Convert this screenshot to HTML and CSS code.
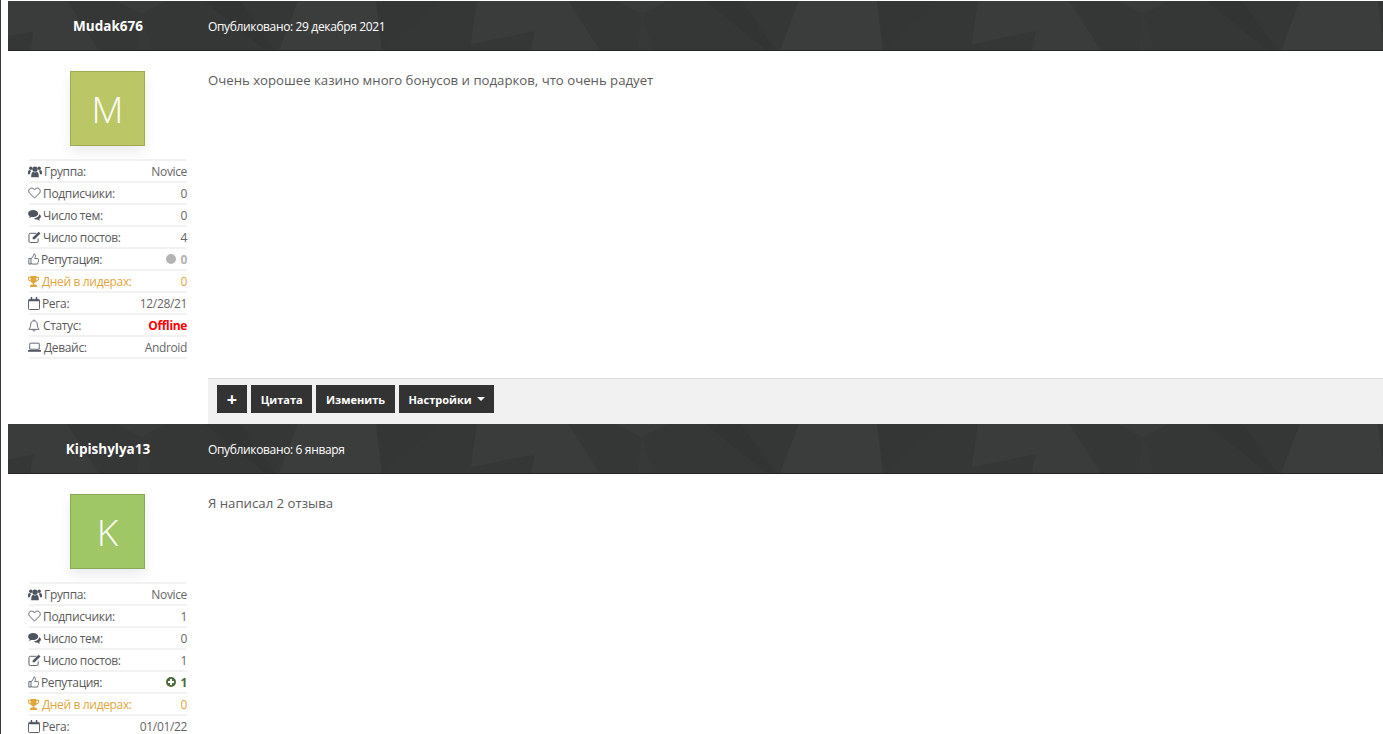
FILE: index.html
```html
<!DOCTYPE html>
<html lang="ru">
<head>
<meta charset="utf-8">
<title>Отзывы</title>
<link rel="stylesheet" href="styles.css">
</head>
<body>
<svg class="sprite" width="0" height="0" aria-hidden="true">
  <defs>
    <pattern id="poly" width="501" height="50" patternUnits="userSpaceOnUse" patternTransform="translate(133 0)">
      <rect width="501" height="50" fill="#353736"/>
      <polygon points="63,0 100,0 135,50 125,50" fill="#323433"/>
      <polygon points="157,0 235,0 241,50 138,50" fill="#3b3d3c"/>
      <polygon points="235,0 300,0 241,50" fill="#343635"/>
      <polygon points="336,0 427,0 459,50 390,50 394,30 330,43" fill="#3a3c3b"/>
      <polygon points="476,0 501,0 501,13" fill="#393b3a"/>
      <polygon points="0,0 25,0 0,13" fill="#393b3a"/>
      <polygon points="0,13 11,50 -4,50" fill="#373938"/>
      <polygon points="501,13 512,50 497,50" fill="#373938"/>
    </pattern>
    <symbol id="i-users" viewBox="0 0 16 14"><circle cx="8" cy="4.4" r="3"/><circle cx="3.2" cy="3.2" r="2"/><circle cx="12.8" cy="3.2" r="2"/><path d="M3.6 13.5c0-4 .8-6 2.4-6.2.6.5 1.3.8 2 .8s1.400-.3 2-.8c1.600.2 2.400 2.200 2.400 6.200z"/><path d="M0 10V8c0-1.500.8-2.600 1.800-2.600.5.500 1.200.7 2 .7-.9 1-1.400 2.200-1.500 3.900zM16 10V8c0-1.500-.8-2.600-1.800-2.600-.5.500-1.200.7-2 .7.900 1 1.400 2.200 1.500 3.900z"/></symbol>
    <symbol id="i-heart" viewBox="0 0 14 13"><path fill="none" stroke="currentColor" stroke-width="1" d="M7 12 1.600 6.600C-.2 4.400 1.200 1.200 3.800 1.200 5.200 1.200 6.400 2 7 3.200 7.600 2 8.800 1.200 10.200 1.200c2.600 0 4 3.200 2.200 5.400z"/></symbol>
    <symbol id="i-comments" viewBox="0 0 14 12"><path d="M5.500 0C2.500 0 0 1.600 0 3.800c0 1.200.7 2.200 1.800 3-.2.600-.5 1.100-1 1.600 1 0 1.900-.4 2.600-.9.600.2 1.300.2 2.100.2 3 0 5.500-1.700 5.500-3.900S8.500 0 5.500 0z"/><path d="M12 4.500c0 2.500-2.700 4.300-5.800 4.400C7 10 8.500 10.600 10.100 10.400c.7.500 1.800 1.100 3 1.100-.5-.5-.9-1.100-1-1.700 1.200-.7 1.900-1.800 1.900-2.900 0-1-.7-1.800-2-2.400z"/></symbol>
    <symbol id="i-edit" viewBox="0 0 14 13"><path fill="none" stroke="currentColor" stroke-width="1" d="M11 8v3a1.500 1.500 0 0 1-1.500 1.500h-7A1.500 1.500 0 0 1 1 11V4a1.500 1.500 0 0 1 1.500-1.500H9"/><path d="M5 7 11.500.8l2 2L7.200 9H5z"/></symbol>
    <symbol id="i-thumb" viewBox="0 0 13 14"><path fill="none" stroke="currentColor" stroke-width="1" d="M3.500 6.500H1v6.500h2.500zM3.500 12.500c1 0 1.500.5 2.500.5h4.500c.8 0 1.300-.5 1.300-1.200 0-.3-.1-.5-.2-.7.500-.2.900-.7.900-1.300 0-.4-.1-.6-.3-.8.400-.3.600-.7.600-1.200 0-.7-.6-1.300-1.300-1.300H8c.4-1 .7-1.700.7-2.800C8.700 1.800 8 1 7 1c-.5 2.500-2 4.800-3.500 5.800"/></symbol>
    <symbol id="i-trophy" viewBox="0 0 13 13"><path d="M3 0h7v1h3v2c0 2-1.500 3.500-3.500 3.700C9 7.500 8 8.200 7.300 8.400V10h1.500c1 0 1.700.7 1.700 1.700V13h-8v-1.300c0-1 .7-1.700 1.700-1.700h1.500V8.400C5 8.200 4 7.500 3.500 6.700 1.500 6.500 0 5 0 3V1h3zM1.200 2.200V3c0 1 .7 2 1.900 2.300C3 4.500 3 3.400 3 2.200zM11.800 2.200H10c0 1.200 0 2.300-.1 3.100 1.200-.3 1.900-1.300 1.900-2.300z"/></symbol>
    <symbol id="i-cal" viewBox="0 0 13 14"><path fill="none" stroke="currentColor" stroke-width="1" d="M1.500 2.500h10a1 1 0 0 1 1 1v9a1 1 0 0 1-1 1h-10a1 1 0 0 1-1-1v-9a1 1 0 0 1 1-1z"/><path d="M1 3h11v1.500H1zM3 0h1.500v3.500H3zM8.500 0H10v3.500H8.500z"/></symbol>
    <symbol id="i-bell" viewBox="0 0 14 14"><path fill="none" stroke="currentColor" stroke-width="1" d="M7 1.500c-2.400 0-3.800 1.700-3.800 4 0 3-1.200 4.600-2.200 6h12c-1-1.400-2.200-3-2.200-6 0-2.300-1.400-4-3.800-4zM5.500 11.700c0 1 .7 1.800 1.500 1.800s1.500-.8 1.500-1.800M7 0v1.500"/></symbol>
    <symbol id="i-laptop" viewBox="0 0 15 12"><path fill="none" stroke="currentColor" stroke-width="1" d="M2.500 1h10a.5.500 0 0 1 .5.500V8H2V1.500a.5.500 0 0 1 .5-.5z"/><path d="M0 9h15v1a1 1 0 0 1-1 1H1a1 1 0 0 1-1-1z"/></symbol>
  </defs>
</svg>

<main class="page">
  <article class="post">
    <header class="post-head">
      <svg class="head-bg" aria-hidden="true"><rect width="100%" height="100%" fill="url(#poly)"/></svg>
      <h3 class="author">Mudak676</h3>
      <p class="date">Опубликовано: 29 декабря 2021</p>
    </header>
    <div class="post-body">
      <aside class="side">
        <div class="avatar avatar-m">M</div>
        <ul class="stats">
          <li class="stat"><span class="label"><svg class="ic ic-users"><use href="#i-users"/></svg>Группа:</span><span class="value">Novice</span></li>
          <li class="stat"><span class="label"><svg class="ic ic-heart"><use href="#i-heart"/></svg>Подписчики:</span><span class="value">0</span></li>
          <li class="stat"><span class="label"><svg class="ic ic-comments"><use href="#i-comments"/></svg>Число тем:</span><span class="value">0</span></li>
          <li class="stat"><span class="label"><svg class="ic ic-edit"><use href="#i-edit"/></svg>Число постов:</span><span class="value">4</span></li>
          <li class="stat"><span class="label"><svg class="ic ic-thumb"><use href="#i-thumb"/></svg>Репутация:</span><span class="value rep rep-neutral"><span class="dot"></span>0</span></li>
          <li class="stat stat-gold"><span class="label"><svg class="ic ic-trophy"><use href="#i-trophy"/></svg>Дней в лидерах:</span><span class="value">0</span></li>
          <li class="stat"><span class="label"><svg class="ic ic-cal"><use href="#i-cal"/></svg>Рега:</span><span class="value">12/28/21</span></li>
          <li class="stat"><span class="label"><svg class="ic ic-bell"><use href="#i-bell"/></svg>Статус:</span><span class="value offline">Offline</span></li>
          <li class="stat"><span class="label"><svg class="ic ic-laptop"><use href="#i-laptop"/></svg>Девайс:</span><span class="value">Android</span></li>
        </ul>
      </aside>
      <div class="content">
        <p class="text">Очень хорошее казино много бонусов и подарков, что очень радует</p>
        <div class="actions">
          <button class="btn btn-plus" type="button">+</button>
          <button class="btn" type="button">Цитата</button>
          <button class="btn" type="button">Изменить</button>
          <button class="btn" type="button">Настройки<span class="caret"></span></button>
        </div>
      </div>
    </div>
  </article>

  <article class="post">
    <header class="post-head">
      <svg class="head-bg" aria-hidden="true"><rect width="100%" height="100%" fill="url(#poly)"/></svg>
      <h3 class="author">Kipishylya13</h3>
      <p class="date">Опубликовано: 6 января</p>
    </header>
    <div class="post-body">
      <aside class="side">
        <div class="avatar avatar-k">K</div>
        <ul class="stats">
          <li class="stat"><span class="label"><svg class="ic ic-users"><use href="#i-users"/></svg>Группа:</span><span class="value">Novice</span></li>
          <li class="stat"><span class="label"><svg class="ic ic-heart"><use href="#i-heart"/></svg>Подписчики:</span><span class="value">1</span></li>
          <li class="stat"><span class="label"><svg class="ic ic-comments"><use href="#i-comments"/></svg>Число тем:</span><span class="value">0</span></li>
          <li class="stat"><span class="label"><svg class="ic ic-edit"><use href="#i-edit"/></svg>Число постов:</span><span class="value">1</span></li>
          <li class="stat"><span class="label"><svg class="ic ic-thumb"><use href="#i-thumb"/></svg>Репутация:</span><span class="value rep rep-good"><span class="dot dot-plus"></span>1</span></li>
          <li class="stat stat-gold"><span class="label"><svg class="ic ic-trophy"><use href="#i-trophy"/></svg>Дней в лидерах:</span><span class="value">0</span></li>
          <li class="stat"><span class="label"><svg class="ic ic-cal"><use href="#i-cal"/></svg>Рега:</span><span class="value">01/01/22</span></li>
        </ul>
      </aside>
      <div class="content">
        <p class="text">Я написал 2 отзыва</p>
      </div>
    </div>
  </article>
</main>
</body>
</html>
```
FILE: styles.css
```css
* { box-sizing: border-box; }

html, body {
  height: 100%;
  margin: 0;
  overflow: hidden;
  background: #fff;
}

body {
  border-left: 1px solid #3a3a3a;
  padding: 1px 0 0 7px;
  font-family: "Open Sans", "Noto Sans", sans-serif;
  font-size: 12px;
  letter-spacing: -.35px;
  color: #5c5c5c;
}

.sprite { position: absolute; }

.post-head {
  position: relative;
  display: flex;
  align-items: center;
  height: 50px;
  border-bottom: 1px solid #262626;
  background: #353736;
  color: #fff;
}

.head-bg {
  position: absolute;
  inset: 0;
  width: 100%;
  height: 100%;
}

.author {
  position: relative;
  width: 200px;
  margin: 0;
  font-size: 13.5px;
  font-weight: 700;
  letter-spacing: 0;
  text-align: center;
}

.date {
  position: relative;
  margin: 0;
  padding-top: 1px;
  font-size: 12px;
  font-weight: 400;
}

.post-body {
  display: grid;
  grid-template-columns: 200px 1fr;
  height: 373px;
}

.side {
  display: flex;
  flex-direction: column;
  padding: 20px 21px 0;
}

.avatar {
  display: flex;
  align-items: center;
  justify-content: center;
  align-self: flex-start;
  width: 75px;
  height: 75px;
  margin: 0 0 13px 41px;
  border: 1px solid rgba(0, 0, 0, .15);
  box-shadow: 0 6px 12px rgba(0, 0, 0, .08);
  color: #fff;
  font-size: 37px;
  font-weight: 340;
  letter-spacing: 0;
}

.avatar-m { background: #bbc766; }
.avatar-k { background: #a0c766; }

.stats {
  margin: 0;
  padding: 0;
  list-style: none;
  border-top: 2px solid #f2f2f2;
}

.stat {
  display: flex;
  align-items: center;
  justify-content: space-between;
  height: 22px;
  border-bottom: 2px solid #f2f2f2;
  white-space: nowrap;
}

.label {
  display: flex;
  align-items: center;
  color: #5a5a5a;
}

.value { color: #666; }

.stat-gold .label, .stat-gold .value { color: #e0a63c; }
.stat-gold .ic { color: #e0a63c; fill: #e0a63c; }

.offline {
  color: #f00;
  font-weight: 700;
}

.ic {
  flex: none;
  margin-left: -1px;
  margin-right: 2px;
  color: #4e5560;
  fill: #4e5560;
}

.ic-users { width: 14px; height: 13px; margin-right: 2px; }
.ic-heart { width: 13px; height: 12px; }
.ic-comments { width: 13px; height: 11px; }
.ic-edit { width: 13px; height: 12px; margin-right: 2px; }
.ic-thumb { width: 11px; height: 12px; }
.ic-trophy { width: 11px; height: 11px; margin-right: 3px; }
.ic-cal { width: 12px; height: 13px; margin-right: 2px; }
.ic-bell { width: 12px; height: 13px; margin-right: 3px; }
.ic-laptop { width: 13px; height: 11px; margin-right: 3px; }

.rep {
  display: flex;
  align-items: center;
  font-weight: 700;
}

.rep-neutral { color: #b3b3b3; }
.rep-good { color: #4c6b3c; }

.dot {
  width: 10px;
  height: 10px;
  margin-right: 4px;
  border-radius: 50%;
  background: #b3b3b3;
}

.dot-plus {
  position: relative;
  background: #4c6b3c;
}

.dot-plus::before, .dot-plus::after {
  content: "";
  position: absolute;
  background: #fff;
}

.dot-plus::before { left: 2px; top: 4px; width: 6px; height: 2px; }
.dot-plus::after { left: 4px; top: 2px; width: 2px; height: 6px; }

.content {
  display: flex;
  flex-direction: column;
  justify-content: space-between;
}

.text {
  margin: 0;
  padding-top: 19px;
  font-size: 13.2px;
  line-height: 20px;
  letter-spacing: 0;
  color: #5c5c5c;
}

.actions {
  display: flex;
  gap: 4px;
  height: 46px;
  padding: 6px 9px 0;
  border-top: 1px solid #dcdcdc;
  background: #f1f1f1;
}

.btn {
  display: flex;
  align-items: center;
  height: 28px;
  padding: 0 9.7px;
  border: 0;
  background: #333;
  color: #fff;
  font-family: inherit;
  font-size: 11px;
  font-weight: 700;
  letter-spacing: 0;
}

.btn-plus {
  justify-content: center;
  width: 30px;
  padding: 0;
  font-size: 18px;
}

.caret {
  width: 0;
  height: 0;
  margin-left: 5px;
  border: 4px solid transparent;
  border-top-color: #fff;
  border-bottom: 0;
}
```
